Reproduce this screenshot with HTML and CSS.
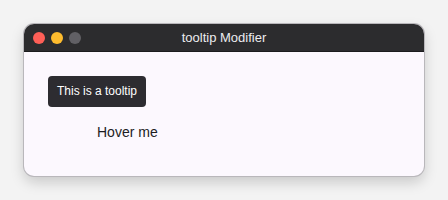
FILE: index.html
```html
<!DOCTYPE html>
<html lang="en">
<head>
  <meta charset="UTF-8">
  <title>tooltip Modifier</title>
  <link rel="stylesheet" href="styles.css">
</head>
<body>
  <div class="window">
    <div class="titlebar">
      <div class="lights">
        <span class="light red"></span>
        <span class="light yellow"></span>
        <span class="light gray"></span>
      </div>
      <div class="title">tooltip Modifier</div>
    </div>
    <div class="content">
      <div class="tooltip">This is a tooltip</div>
      <div class="hover-target">Hover me</div>
    </div>
  </div>
</body>
</html>
```

FILE: styles.css
```css
body {
  margin: 0;
  padding: 24px;
  background-color: #f3f3f3;
  font-family: "Liberation Sans", Arial, sans-serif;
}
.window {
  width: 400px; height: 152px;
  border-radius: 10px; overflow: hidden;
  background-color: #fcf8fe;
  box-shadow: 0 0 0 1px #b9b7bb, 0 6px 14px rgba(0, 0, 0, 0.18);
  display: flex; flex-direction: column;
}
.titlebar {
  height: 27px; position: relative;
  background-color: #2c2c2e;
  border-bottom: 1px solid #1c1c1e;
  display: flex; align-items: center; justify-content: center;
}
.lights {
  position: absolute; left: 9px; top: 8px;
  display: flex; gap: 6px;
}
.light { width: 12px; height: 12px; border-radius: 50%; }
.light.red { background-color: #fe5f57; }
.light.yellow { background-color: #febc2e; }
.light.gray { background-color: #616065; }
.title { color: #ececee; font-size: 13px; }
.content { padding: 24px 24px 0; }
.tooltip {
  display: inline-block;
  background-color: #2d2c31; color: white;
  font-size: 12px; line-height: 31px;
  padding: 0 9px; border-radius: 4px;
}
.hover-target {
  margin: 17px 0 0 49px;
  font-size: 14px; line-height: 17px; color: #1d1d1f;
}
```
